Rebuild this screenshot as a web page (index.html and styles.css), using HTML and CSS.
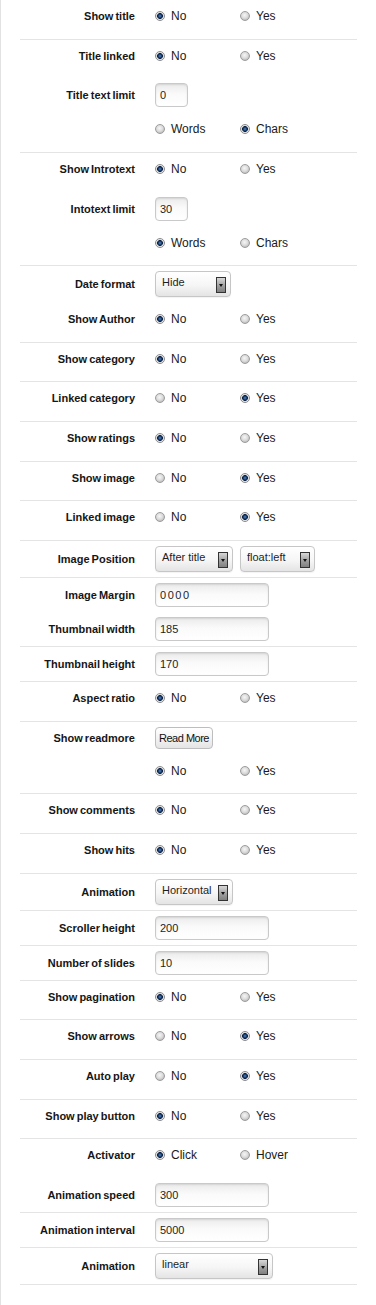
FILE: index.html
```html
<!DOCTYPE html>
<html>
<head>
<meta charset="utf-8">
<link rel="stylesheet" href="styles.css">
</head>
<body>
<div class="page">
<ul class="params">
  <li class="group">
    <div class="row radio-row"><span class="lbl">Show title</span><div class="ctl"><span class="opt"><span class="radio on"></span>No</span><span class="opt"><span class="radio"></span>Yes</span></div></div>
  </li>
  <li class="group">
    <div class="row radio-row"><span class="lbl">Title linked</span><div class="ctl"><span class="opt"><span class="radio on"></span>No</span><span class="opt"><span class="radio"></span>Yes</span></div></div>
    <div class="row input-row"><span class="lbl">Title text limit</span><div class="ctl"><input class="field small" type="text" value="0"></div></div>
    <div class="row radio-row sub"><span class="lbl"></span><div class="ctl"><span class="opt"><span class="radio"></span>Words</span><span class="opt"><span class="radio on"></span>Chars</span></div></div>
  </li>
  <li class="group">
    <div class="row radio-row"><span class="lbl">Show Introtext</span><div class="ctl"><span class="opt"><span class="radio on"></span>No</span><span class="opt"><span class="radio"></span>Yes</span></div></div>
    <div class="row input-row"><span class="lbl">Intotext limit</span><div class="ctl"><input class="field small" type="text" value="30"></div></div>
    <div class="row radio-row sub"><span class="lbl"></span><div class="ctl"><span class="opt"><span class="radio on"></span>Words</span><span class="opt"><span class="radio"></span>Chars</span></div></div>
  </li>
  <li class="group">
    <div class="row select-row"><span class="lbl">Date format</span><div class="ctl"><div class="select w75"><span class="sel-text">Hide</span><span class="arrow"></span></div></div></div>
    <div class="row radio-row sub"><span class="lbl">Show Author</span><div class="ctl"><span class="opt"><span class="radio on"></span>No</span><span class="opt"><span class="radio"></span>Yes</span></div></div>
  </li>
  <li class="group">
    <div class="row radio-row"><span class="lbl">Show category</span><div class="ctl"><span class="opt"><span class="radio on"></span>No</span><span class="opt"><span class="radio"></span>Yes</span></div></div>
  </li>
  <li class="group">
    <div class="row radio-row"><span class="lbl">Linked category</span><div class="ctl"><span class="opt"><span class="radio"></span>No</span><span class="opt"><span class="radio on"></span>Yes</span></div></div>
  </li>
  <li class="group">
    <div class="row radio-row"><span class="lbl">Show ratings</span><div class="ctl"><span class="opt"><span class="radio on"></span>No</span><span class="opt"><span class="radio"></span>Yes</span></div></div>
  </li>
  <li class="group">
    <div class="row radio-row"><span class="lbl">Show image</span><div class="ctl"><span class="opt"><span class="radio"></span>No</span><span class="opt"><span class="radio on"></span>Yes</span></div></div>
  </li>
  <li class="group">
    <div class="row radio-row"><span class="lbl">Linked image</span><div class="ctl"><span class="opt"><span class="radio"></span>No</span><span class="opt"><span class="radio on"></span>Yes</span></div></div>
  </li>
  <li class="group">
    <div class="row select-row"><span class="lbl">Image Position</span><div class="ctl gap7"><div class="select w77"><span class="sel-text">After title</span><span class="arrow"></span></div><div class="select w74"><span class="sel-text">float:left</span><span class="arrow"></span></div></div></div>
  </li>
  <li class="group">
    <div class="row input-row"><span class="lbl">Image Margin</span><div class="ctl"><input class="field wide margin" type="text" value="0 0 0 0"></div></div>
    <div class="row input-row"><span class="lbl">Thumbnail width</span><div class="ctl"><input class="field wide" type="text" value="185"></div></div>
  </li>
  <li class="group">
    <div class="row input-row"><span class="lbl">Thumbnail height</span><div class="ctl"><input class="field wide" type="text" value="170"></div></div>
  </li>
  <li class="group">
    <div class="row radio-row"><span class="lbl">Aspect ratio</span><div class="ctl"><span class="opt"><span class="radio on"></span>No</span><span class="opt"><span class="radio"></span>Yes</span></div></div>
  </li>
  <li class="group">
    <div class="row button-row"><span class="lbl">Show readmore</span><div class="ctl"><button class="btn" type="button">Read More</button></div></div>
    <div class="row radio-row sub"><span class="lbl"></span><div class="ctl"><span class="opt"><span class="radio on"></span>No</span><span class="opt"><span class="radio"></span>Yes</span></div></div>
  </li>
  <li class="group">
    <div class="row radio-row"><span class="lbl">Show comments</span><div class="ctl"><span class="opt"><span class="radio on"></span>No</span><span class="opt"><span class="radio"></span>Yes</span></div></div>
  </li>
  <li class="group">
    <div class="row radio-row"><span class="lbl">Show hits</span><div class="ctl"><span class="opt"><span class="radio on"></span>No</span><span class="opt"><span class="radio"></span>Yes</span></div></div>
  </li>
  <li class="group">
    <div class="row select-row"><span class="lbl">Animation</span><div class="ctl"><div class="select w77"><span class="sel-text">Horizontal</span><span class="arrow"></span></div></div></div>
  </li>
  <li class="group">
    <div class="row input-row"><span class="lbl">Scroller height</span><div class="ctl"><input class="field wide" type="text" value="200"></div></div>
  </li>
  <li class="group">
    <div class="row input-row"><span class="lbl">Number of slides</span><div class="ctl"><input class="field wide" type="text" value="10"></div></div>
  </li>
  <li class="group">
    <div class="row radio-row"><span class="lbl">Show pagination</span><div class="ctl"><span class="opt"><span class="radio on"></span>No</span><span class="opt"><span class="radio"></span>Yes</span></div></div>
  </li>
  <li class="group">
    <div class="row radio-row"><span class="lbl">Show arrows</span><div class="ctl"><span class="opt"><span class="radio"></span>No</span><span class="opt"><span class="radio on"></span>Yes</span></div></div>
  </li>
  <li class="group">
    <div class="row radio-row"><span class="lbl">Auto play</span><div class="ctl"><span class="opt"><span class="radio"></span>No</span><span class="opt"><span class="radio on"></span>Yes</span></div></div>
  </li>
  <li class="group">
    <div class="row radio-row"><span class="lbl">Show play button</span><div class="ctl"><span class="opt"><span class="radio on"></span>No</span><span class="opt"><span class="radio"></span>Yes</span></div></div>
  </li>
  <li class="group">
    <div class="row radio-row"><span class="lbl">Activator</span><div class="ctl"><span class="opt"><span class="radio on"></span>Click</span><span class="opt"><span class="radio"></span>Hover</span></div></div>
    <div class="row input-row"><span class="lbl">Animation speed</span><div class="ctl"><input class="field wide" type="text" value="300"></div></div>
  </li>
  <li class="group">
    <div class="row input-row"><span class="lbl">Animation interval</span><div class="ctl"><input class="field wide" type="text" value="5000"></div></div>
  </li>
  <li class="group">
    <div class="row select-row"><span class="lbl">Animation</span><div class="ctl"><div class="select w117"><span class="sel-text">linear</span><span class="arrow"></span></div></div></div>
  </li>
</ul>
</div>
</body>
</html>
```

FILE: styles.css
```css
html, body {
  margin: 0;
  padding: 0;
  background: #ffffff;
}

body {
  font-family: "Liberation Sans", Arial, sans-serif;
  color: #1e1e1e;
}

.page {
  min-height: 1305px;
  border-left: 1px solid #e2e2e2;
  box-sizing: border-box;
}

.params {
  list-style: none;
  margin: 0 0 0 19px;
  padding: 0;
  width: 337px;
}

.group {
  border-bottom: 1px solid #e4e4e4;
  display: flex;
  flex-direction: column;
}

.row {
  display: flex;
  align-items: center;
  gap: 20px;
}

.radio-row {
  height: 16px;
  padding: 8px 0 14.7px;
}

.radio-row.sub {
  padding: 9px 0 14.5px;
}

.input-row {
  height: 24px;
  padding: 5px 0;
}

.select-row {
  height: 26px;
  padding: 5px 0;
}

.button-row {
  height: 22px;
  padding: 5px 0;
}

.lbl {
  width: 115px;
  flex: none;
  text-align: right;
  font-size: 11px;
  font-weight: bold;
  color: #161616;
  word-spacing: -1px;
  white-space: nowrap;
}

.ctl {
  display: flex;
  align-items: center;
}

.ctl.gap7 {
  gap: 7px;
}

.opt {
  width: 85px;
  display: flex;
  align-items: center;
  gap: 6px;
  font-size: 12px;
  color: #1a1a1a;
}

.radio {
  width: 10px;
  height: 10px;
  box-sizing: border-box;
  border-radius: 50%;
  border: 1px solid #9c9c9c;
  background: radial-gradient(circle at 45% 40%, #f6f6f6 0, #dcdcdc 3px, #bdbdbd 5px);
  flex: none;
}

.radio.on {
  border-color: #8a8a8a;
  background: radial-gradient(circle at 50% 50%, #5a86c0 0, #1d4377 1.5px, #0c2243 2.6px, #dadada 3.2px, #f2f2f2 4px);
}

.field {
  box-sizing: border-box;
  height: 24px;
  margin: 0;
  border: 1px solid #c9c9c9;
  border-radius: 4px;
  padding: 0 0 0 4px;
  font-family: "Liberation Sans", Arial, sans-serif;
  font-size: 11px;
  color: #1e1e1e;
  background: linear-gradient(#ebebeb, #fafafa 45%, #ffffff);
  box-shadow: inset 0 1px 2px rgba(0, 0, 0, 0.1);
  outline: none;
}

.field.small {
  width: 33px;
}

.field.wide {
  width: 114px;
}

.field.margin {
  word-spacing: -1.5px;
}

.select {
  box-sizing: border-box;
  height: 26px;
  display: flex;
  align-items: center;
  justify-content: space-between;
  border: 1px solid #c6c6c6;
  border-radius: 4px;
  background: linear-gradient(#ffffff, #f6f6f6 55%, #e4e4e4);
  box-shadow: 0 1px 1px rgba(0, 0, 0, 0.05);
  padding: 0 4px 0 6px;
}

.select.w75 { width: 76px; }
.select.w77 { width: 78px; }
.select.w74 { width: 75px; }
.select.w117 { width: 118px; }

.sel-text {
  font-size: 11px;
  color: #1e1e1e;
  margin-top: -4px;
  white-space: nowrap;
}

.arrow {
  width: 10px;
  height: 16px;
  box-sizing: border-box;
  border: 1px solid #333333;
  background: linear-gradient(#d8d8d8, #9c9c9c 60%, #808080);
  display: flex;
  align-items: center;
  justify-content: center;
  flex: none;
  margin-top: 2px;
}

.arrow::after {
  content: "";
  width: 0;
  height: 0;
  border-left: 2.5px solid transparent;
  border-right: 2.5px solid transparent;
  border-top: 3px solid #111111;
  margin-top: 1px;
}

.btn {
  box-sizing: border-box;
  width: 58px;
  height: 22px;
  margin: 0;
  padding: 0;
  border: 1px solid #bdbdbd;
  border-radius: 4px;
  background: linear-gradient(#ffffff, #f3f3f3 50%, #e4e4e4);
  font-family: "Liberation Sans", Arial, sans-serif;
  font-size: 11px;
  letter-spacing: -0.5px;
  color: #111111;
}
```
